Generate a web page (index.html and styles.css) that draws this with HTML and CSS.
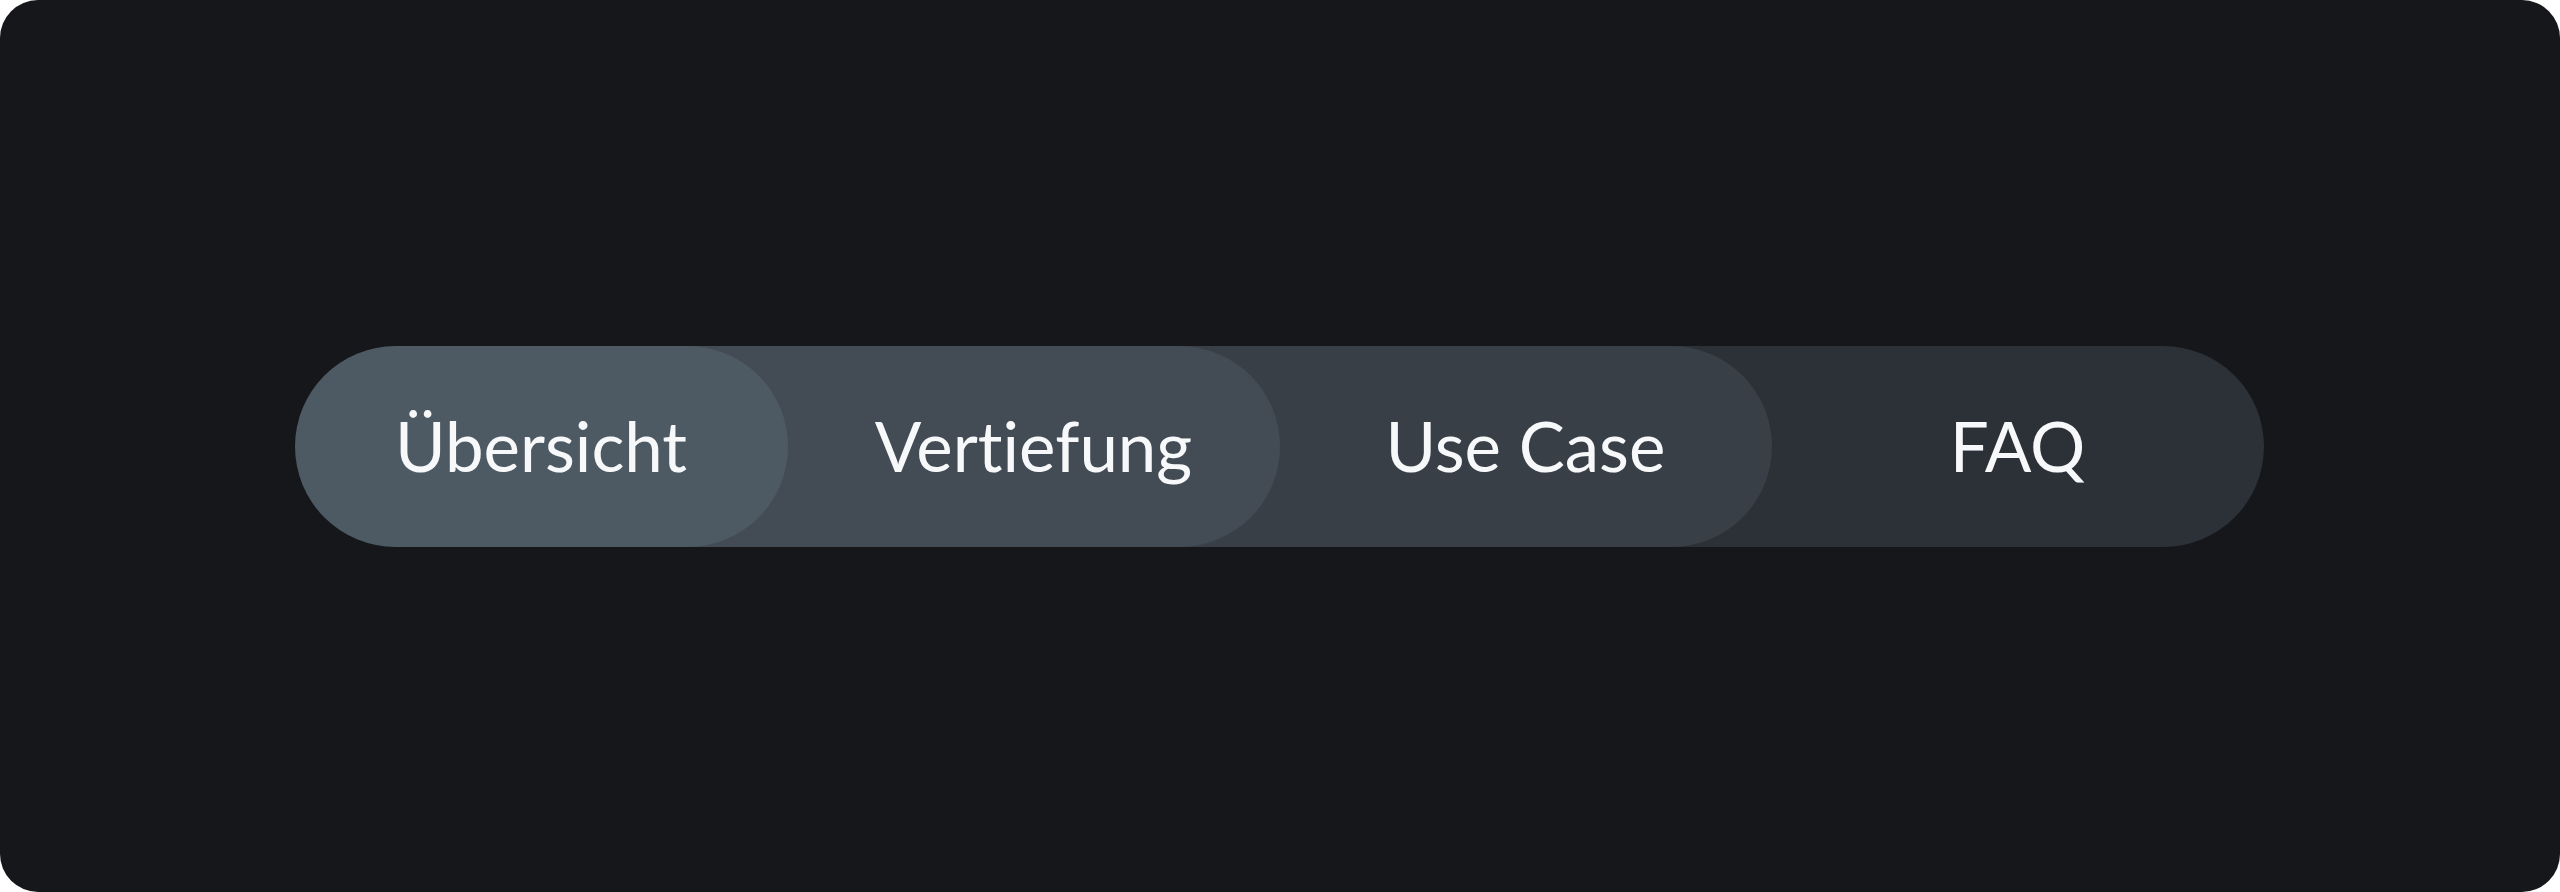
FILE: index.html
```html
<!DOCTYPE html>
<html lang="de">
<head>
<meta charset="utf-8">
<title>Tabs</title>
<link rel="stylesheet" href="styles.css">
</head>
<body>
<div class="stage">
  <nav class="tabs">
    <a class="tab tab-1" href="#">Übersicht</a>
    <a class="tab tab-2" href="#">Vertiefung</a>
    <a class="tab tab-3" href="#">Use Case</a>
    <a class="tab tab-4" href="#">FAQ</a>
  </nav>
</div>
</body>
</html>
```

FILE: styles.css
```css
html, body {
  margin: 0;
  padding: 0;
  background: #ffffff;
}

.stage {
  width: 2560px;
  height: 892px;
  box-sizing: border-box;
  background: #15171b;
  border-radius: 38px;
  display: flex;
  align-items: center;
  justify-content: center;
}

.tabs {
  display: flex;
  height: 201px;
  margin-left: -2px;
}

.tab {
  position: relative;
  display: flex;
  align-items: center;
  justify-content: center;
  box-sizing: border-box;
  height: 100%;
  width: 493px;
  border-radius: 101px;
  color: #f7f8f9;
  text-decoration: none;
  font-family: "Lato", "Open Sans", sans-serif;
  font-size: 69px;
  font-weight: 400;
  font-variant-ligatures: none;
  padding-bottom: 2px;
}

.tab-2, .tab-3, .tab-4 {
  margin-left: -210px;
  padding-left: 210px;
  width: 702px;
}

.tab-1 { background: #4e5a63; z-index: 4; }
.tab-2 { background: #434c55; z-index: 3; }
.tab-3 { background: #383f47; z-index: 2; }
.tab-4 { background: #2c3138; z-index: 1; }
```
